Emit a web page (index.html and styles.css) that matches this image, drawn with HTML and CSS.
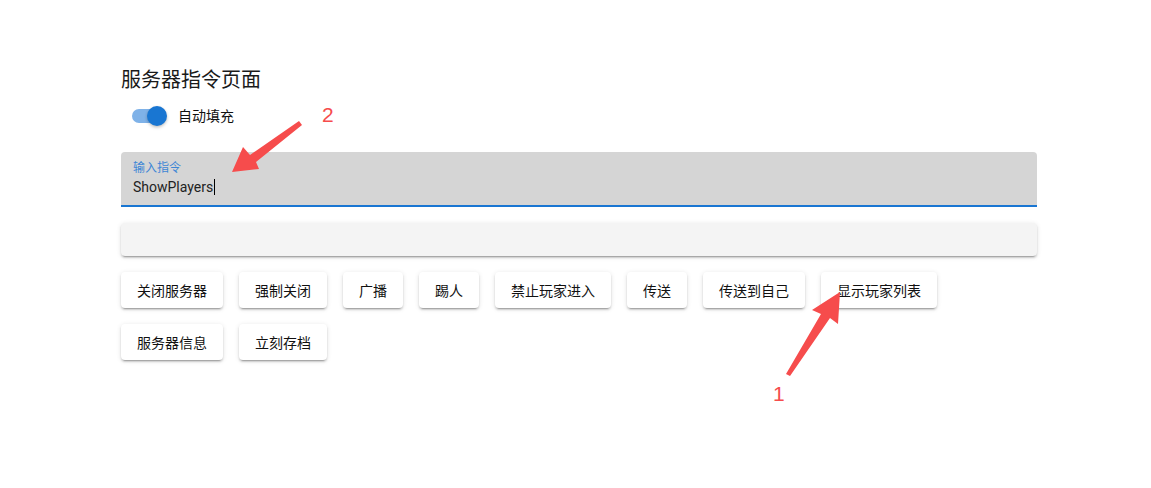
FILE: index.html
```html
<!DOCTYPE html>
<html lang="zh">
<head>
<meta charset="utf-8">
<title>服务器指令页面</title>
<link rel="stylesheet" href="styles.css">
</head>
<body>
<div class="page">
  <h1 class="title">服务器指令页面</h1>
  <div class="switch-row">
    <div class="switch">
      <span class="track"></span>
      <span class="thumb"></span>
    </div>
    <span class="switch-label">自动填充</span>
  </div>
  <div class="field">
    <div class="field-label">输入指令</div>
    <div class="field-input">ShowPlayers<span class="caret"></span></div>
  </div>
  <div class="output"></div>
  <div class="buttons">
    <button class="btn">关闭服务器</button>
    <button class="btn">强制关闭</button>
    <button class="btn">广播</button>
    <button class="btn">踢人</button>
    <button class="btn">禁止玩家进入</button>
    <button class="btn">传送</button>
    <button class="btn">传送到自己</button>
    <button class="btn">显示玩家列表</button>
    <button class="btn">服务器信息</button>
    <button class="btn">立刻存档</button>
  </div>
</div>
<svg class="annot" width="1151" height="488" viewBox="0 0 1151 488">
  <polygon fill="#f64c4c" points="232,172 243,147 250,155 299,121 302,125 256,162 259,169"/>
  <text x="322" y="122" fill="#f64c4c" font-family="Liberation Sans, Arial, sans-serif" font-size="21">2</text>
  <polygon fill="#f64c4c" points="840,292 812,310 821,314 786,374 790,376 830,318 838,324"/>
  <text x="773" y="401" fill="#f64c4c" font-family="Liberation Sans, Arial, sans-serif" font-size="21">1</text>
</svg>
</body>
</html>
```
FILE: styles.css
```css
*, *::before, *::after {
  box-sizing: border-box;
}
html, body {
  margin: 0;
  padding: 0;
  background: #ffffff;
}
body {
  font-family: Roboto, "Noto Sans CJK SC", sans-serif;
  color: rgba(0, 0, 0, 0.87);
  position: relative;
  width: 1151px;
  height: 488px;
  overflow: hidden;
}
.page {
  width: 916px;
  margin-left: 121px;
  padding-top: 64px;
}
.title {
  margin: 0;
  font-size: 20px;
  font-weight: 400;
  line-height: 32px;
  height: 32px;
  color: #1a1a1a;
}
.switch-row {
  margin-top: 8px;
  height: 24px;
  display: flex;
  align-items: center;
  padding-left: 11px;
}
.switch {
  position: relative;
  width: 36px;
  height: 24px;
  display: flex;
  align-items: center;
}
.track {
  display: block;
  width: 34px;
  height: 14px;
  border-radius: 8px;
  background: #7fb2e8;
}
.thumb {
  position: absolute;
  left: 15px;
  top: 2px;
  width: 20px;
  height: 20px;
  border-radius: 50%;
  background: #1976d2;
  box-shadow: 0 2px 4px -1px rgba(0,0,0,.2), 0 1px 3px rgba(0,0,0,.14);
}
.switch-label {
  margin-left: 10px;
  font-size: 14px;
  line-height: 20px;
  color: #111;
}
.field {
  margin-top: 24px;
  background: #d5d5d5;
  border-radius: 4px 4px 0 0;
  border-bottom: 2px solid #1976d2;
  padding: 8px 12px;
  height: 55px;
}
.field-label {
  font-size: 12px;
  line-height: 16px;
  color: #3d86d6;
}
.field-input {
  margin-top: 1px;
  font-size: 14px;
  line-height: 20px;
  color: #222;
  display: flex;
  align-items: center;
}
.caret {
  display: inline-block;
  width: 1px;
  height: 16px;
  background: #000;
  margin-left: 1px;
}
.output {
  margin-top: 16px;
  height: 33px;
  background: #f4f4f4;
  border-radius: 4px;
  box-shadow: 0 3px 1px -2px rgba(0,0,0,.2), 0 2px 2px 0 rgba(0,0,0,.14), 0 1px 5px 0 rgba(0,0,0,.12);
}
.buttons {
  margin-top: 16px;
  display: flex;
  flex-wrap: wrap;
  gap: 16px;
}
.btn {
  height: 36px;
  padding: 0 16px;
  border: none;
  border-radius: 4px;
  background: #ffffff;
  font-family: Roboto, "Noto Sans CJK SC", sans-serif;
  font-size: 14px;
  color: #111;
  box-shadow: 0 3px 1px -2px rgba(0,0,0,.2), 0 2px 2px 0 rgba(0,0,0,.14), 0 1px 5px 0 rgba(0,0,0,.12);
  cursor: pointer;
}
.annot {
  position: absolute;
  left: 0;
  top: 0;
  pointer-events: none;
}
```
